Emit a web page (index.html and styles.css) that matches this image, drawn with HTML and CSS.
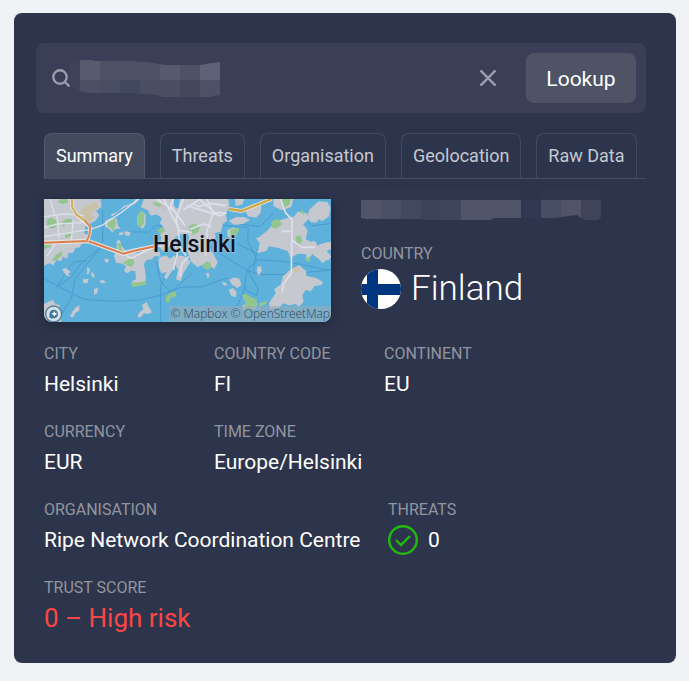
FILE: index.html
```html
<!DOCTYPE html>
<html lang="en">
<head>
<meta charset="UTF-8">
<meta name="viewport" content="width=device-width, initial-scale=1">
<title>IP Lookup</title>
<link rel="stylesheet" href="styles.css">
</head>

<body>

<main class="card">
  <form class="search" role="search">
    <svg class="search-icon" viewBox="0 0 18 18" width="18" height="18" aria-hidden="true">
      <circle cx="8" cy="8" r="6.7" />
      <path d="M13 13l3.7 3.7" />
    </svg>
    <div class="search-field">
      <input class="search-input" type="text" name="ip" aria-label="IP address">
      <!-- hidden address -->
      <svg class="search-mask" viewBox="0 0 152 38" width="152" height="38" aria-hidden="true">
        <defs>
          <clipPath id="mask1"><path d="M12 0h13v1h38l16 1 13 2 5 1h35l12-2 8-1v33l-8 1v1H95l-7-2-14-1-12-1H20l-9-2C4 27 0 21 0 15 0 7 4 0 12 0z" /></clipPath>
        </defs>
        <g clip-path="url(#mask1)">
          <path fill="#3f4359" d="M0 0h12v38H0z" />
          <path fill="#575b6e" d="M12 0h20v20H12z" />
          <path fill="#4c5165" d="M32 0h60v20H32z" />
          <path fill="#555a6d" d="M92 0h20v20H92z" />
          <path fill="#4d5266" d="M112 0h20v20h-20z" />
          <path fill="#5d6175" d="M132 0h20v20h-20z" />
          <path fill="#4c5064" d="M12 20h20v18H12z" />
          <path fill="#494e62" d="M32 20h20v18H32z" />
          <path fill="#41495e" d="M52 20h20v18H52z" />
          <path fill="#4a4f63" d="M72 20h40v18H72z" />
          <path fill="#43475c" d="M112 20h20v18h-20z" />
          <path fill="#4d5166" d="M132 20h20v18h-20z" />
        </g>
      </svg>
    </div>
    <button class="search-clear" type="reset" aria-label="Clear">
      <svg viewBox="0 0 16 16" width="16" height="16" aria-hidden="true"><path d="M1.2 1.2l13.6 13.6M14.8 1.2L1.2 14.8" /></svg>
    </button>
    <button class="search-button" type="button">Lookup</button>
  </form>

  <nav class="tabs">
    <a class="tab active" href="#summary">Summary</a>
    <a class="tab" href="#threats">Threats</a>
    <a class="tab" href="#organisation">Organisation</a>
    <a class="tab" href="#geolocation">Geolocation</a>
    <a class="tab" href="#raw">Raw Data</a>
  </nav>

  <section class="summary" id="summary">
    <div class="overview">
      <div class="map">
        <svg class="map-tile" viewBox="12 27 861 369" aria-hidden="true">
          <path fill="#5db1da" d="M12 27h861v369H12z" />
          <!-- shipping lanes -->
          <g fill="none" stroke="#4a9bd0" stroke-width="3">
            <path d="M188 60v95l-12 22-50 40-30 42-48 33 52-76 38-4" />
            <path d="M12 266l60 32 60 30 90 6 78-4 62-14 60-24 65-2 45-16 30-10" />
            <path d="M188 165l-82 100-12 60-36 60M362 396V285l20-35M265 126h60l25-20 28 4M350 215l12 60 30 32" />
            <path d="M395 305l60-55M510 170l60 40 50 30 40 14h60l150-14M622 237l34-28 70 5 60 10 87 18M622 237l-10 60 38 20 4-20-30-55M545 105l80 8-2 40 30 60M590 160l60 30-10 50M590 350l28-60M700 70l-40 40-60-8M793 85l22 22 58-6" />
          </g>
          <!-- land -->
          <g fill="#c6c8d0">
            <path d="M12 27h170l3 23-17 13 10 12-12 18-30 15-4 20 18 14-12 12-14 8-4 10-14 2-6 14-16 2-2 16-12-6-8 14-12-4-10 16-12-6-26 12z" />
            <path d="M66 238l12-4 14 12-8 6 8 10-14-6zM140 232l10 4-2 14-8 4 2-12zM128 268l18-2-4 14-12-2zM162 298l12-6-2 18-10 4zM178 272l14-2 4 8-12 2zM195 206l12 2-4 12-10-6zM158 245l6 14-4 6-8-12z" />
            <path d="M12 342l26-12 8 12 14 4-4 26 8 24H12zM98 364l10-12 10-6 0 16-12 6-6 14-10-2zM300 366l10-8-4-12 14-10 6 14 10 16-10 6-14-2-12 14-8-6z" />
            <path d="M195 92l18-8 18 2 2 18 8 12-18 2-6 10-10-12-12-6zM215 80l22-18 26-14 22-6 14-15h-12l-8 12-26 8-22 18-18 8zM238 128l10-2 2 8-14 2zM252 124l20 2-4 12-12-2z" />
            <path d="M292 78l12-16 14 12-2 30-8 12-16-10zM312 27h90v20l20 20 10 26 20 4-2 26-12 14-16-4-18 10-2 20-34 20-10-12 6-26-6-22 12-12-10-12 6-14-16-12-18 4-8-16-22-10z" />
            <path d="M230 152l10-2 4 18 18 18 20-6 8 10 18-6 6-12 20-2 6 12 18 2 4 16-18-2-8 10-16 2-8 12 6 40-2 20-40 4v-12l12-6-2-24-12-2-14 8-8-8 6-14-16-8-14-2-6-20 8-16z" />
            <path d="M356 204l22-8 12 10 14-10 4 22-12 24-16 26-8-6 8-16-16 4-8-20zM412 196l26 4 14 16-10 14-12 20-8 24-14-6 6-28-8-16zM420 27h145l4 26-12 16 4 24-12 8-6 24-18 4 2 16-20 6-8 20 20 18 14 28-10 20-12-8-16 8-4-14-18 8-20-16-12-34 6-40-10-30-26-40z" />
            <path d="M566 92l24-12 24 2 16 8-22 12-26 2zM562 120l20-8 12 12-8 18-14 4-10-8zM616 62l20-14 14-8 14 3-2 26-14 14-24-4zM585 27h28l-6 16-20 6zM800 80l10-24 26-22 26 2 10 18-6 26-20 14-8-6-10 10-16-2z" />
            <path d="M655 143l30-24 20-22 26-10 32-8 10-14 26 4 6 20-16 14 14 18-6 26 14 8 14-2 8 14 40-12 6 20-20 8 16 16-10 12-26-2-22-16-18 20 0-20-24-2-24 12-8-20-30-10-26-4-8 14-26 6 6-30-12-16z" />
            <path d="M700 27h60l-6 24-28 10-26-12zM693 330l14-20-4-12 20-16 6-24 24-20 24-12 22 18 0 14 30 6 20 12-6 10-20 2-10 16-16-4-10 16 4 20-14 14-10-8-20 4-18-6-12 14-28 4-2-18z" />
            <path d="M652 230l10-2 4 12-10 18-6-14zM568 270l14-8 16 4 6 18-12 10-16-10zM566 300l12-6 12 12-2 16-14-4zM546 275l12 4 4 8-12-2zM498 250l8-2 2 12-6 4zM608 346l34-16 10 12-6 16-38 2z" />
            <path d="M835 165l30-10 8 12-10 14-22 4zM840 208l16-2 0 10-12 2z" />
          </g>
          <!-- parks -->
          <g fill="#92c68e">
            <path d="M62 27l18-2 4 12-16 6-14-6zM20 90l14-8 20 14-6 16-16 4-12-10zM62 100l16-14 20 2-4 10-18 4-4 10zM35 210l16-18 14-8 2 12-20 16zM75 136l20-8-2 10-16 8zM12 158h18l2 14-20 6z" />
            <path d="M205 92l20-6 4 14-10 22-6-8-10-4zM294 72l10-10 10 10-2 28-10 12-10-8zM338 36l18 2 14 10-12 4-16-8zM352 120l18-10 6 12-16 12zM230 158l12 4 4 18 16 6-4 6-20-8zM246 218l20-10 12-6 6 16-10 14-20-10zM274 278l42-4 6 8-22 6-26 4zM408 170l16-4 6 14-18 8zM378 320l12-12 16-4 4 14-18 6-6 14-8-2z" />
            <path d="M446 108l18-8 16 10-4 16-18 8-10-8zM486 230l12-16 14 4 2 12-10 10zM570 120l24-8 4 8-14 24-12-2zM606 316l10-6 14 10 20 8 0 20-10 10-28-2 4-20zM656 340l26-8-4 10-20 8zM694 94l20-8 12 16-16 14-14-4zM724 27h28l-4 18-18 10-4-8zM766 140l16-4 6 16-14 16-6-8zM784 58l10 8-2 8-10-6zM796 200l16 6-4 10-12-6z" />
          </g>
          <g fill="#c8c2a8">
            <path d="M120 62l20-16 26-10 10 14-24 20 10 14-12 14-16-10zM756 240l14-10 12 8-12 12z" />
          </g>
          <path fill="#cbbccc" d="M362 38l20 8-4 18-16-12zM400 52l20 4-4 18-10-6z" />
          <!-- streets -->
          <g fill="none" stroke="#dce0eb" stroke-width="5" stroke-linejoin="round">
            <path d="M12 80l60-8 60 4M50 75l8 70M12 140l140-22 34-12 60-40 50-39M12 112l40-10 76-4M20 200l30-44M100 90l-6 60M30 27l14 48" stroke-width="4" />
            <path d="M372 27l24 50 18 34 6 60 18 26M430 27l-22 60 8 34 40 6M350 27l60 40M400 27l-8 20 44 60M400 240l12-50-8-30-60 10-70 35-18-10M420 260l6-40 20-20" />
            <path d="M430 60l50-33M440 47l40 12 60 18 20-8M455 40l22 10 35-10 46 7M478 27l46 40 36 2M500 27l20 40-20 60 4 40-8 30M514 110l-24-8-40 16" />
            <path d="M722 27l14 40 20 22-2 160-24 34-4 24M724 124h30M756 150l30 22 40 0" />
          </g>
          <!-- main roads -->
          <g fill="none" stroke-linejoin="round">
            <path stroke="#e8e4e0" stroke-width="13" d="M12 158l132-5 50 18 55 20 34-9 62-13" />
            <path stroke="#d97f4e" stroke-width="6" d="M12 158l132-5 50 18 55 20 34-9 62-13" />
            <path stroke="#e8e4e0" stroke-width="11" d="M96 27v22l12 24 28 24 15 16-3 22-8 18" />
            <path stroke="#cfad56" stroke-width="6" d="M96 27v22l12 24 28 20" />
            <path stroke="#d88755" stroke-width="6" d="M134 91l17 20-3 24-8 18" />
            <path stroke="#e8e4e0" stroke-width="12" d="M567 57l38 6 90-36" />
            <path stroke="#cda845" stroke-width="7" d="M567 57l38 6 90-36" />
          </g>
          <!-- logo -->
          <circle cx="41" cy="372" r="24" fill="#d6e0e8" stroke="#557f98" stroke-width="4" />
          <path fill="#3e7a99" d="M29 384c-2-14 0-24 12-25 17 0 17 25 1 26-5 1-9 0-13-1z" />
          <path fill="#fff" d="M43 363l3 6 6 2-6 3-3 6-3-6-6-3 6-2z" />
        </svg>
        <span class="map-city">Helsinki</span>
        <span class="map-credit">© Mapbox © OpenStreetMap</span>
      </div>

      <div class="place">
        <!-- hidden address -->
        <svg class="place-mask" viewBox="0 0 240 32" width="240" height="32" aria-hidden="true">
          <path fill="#2f364e" d="M0 0h160v12H0zM180 0h60v12h-60z" />
          <path fill="#4f5468" d="M0 12h20v19H5l-5-1z" />
          <path fill="#4a5065" d="M20 12h20v19H20z" />
          <path fill="#424a5f" d="M40 12h20v19H40z" />
          <path fill="#3e4359" d="M60 12h20v20H65l-5-1z" />
          <path fill="#3e465b" d="M80 12h20v20H80z" />
          <path fill="#4f5468" d="M100 12h60v18h-27l-3 2h-30z" />
          <path fill="#323852" d="M160 12h20v18h-20z" />
          <path fill="#484e63" d="M180 12h20v17l-6 1h-14z" />
          <path fill="#4f5468" d="M200 12h20v18l-4-3-16 2z" />
          <path fill="#404459" d="M220 12h20v17l-3 3h-13l-4-3z" />
        </svg>
        <dl class="item">
          <dt>COUNTRY</dt>
          <dd class="country">
            <svg class="flag" viewBox="0 0 40 40" width="40" height="40" aria-hidden="true">
              <clipPath id="round"><circle cx="20" cy="20" r="20" /></clipPath>
              <g clip-path="url(#round)">
                <path fill="#fff" d="M0 0h40v40H0z" />
                <path fill="#003580" d="M6 0h11v40H6zM0 15h40v11H0z" />
              </g>
            </svg>
            Finland
          </dd>
        </dl>
      </div>
    </div>

    <div class="row">
      <dl class="item col"><dt>CITY</dt><dd>Helsinki</dd></dl>
      <dl class="item col"><dt>COUNTRY CODE</dt><dd>FI</dd></dl>
      <dl class="item col"><dt>CONTINENT</dt><dd>EU</dd></dl>
    </div>

    <div class="row">
      <dl class="item col"><dt>CURRENCY</dt><dd>EUR</dd></dl>
      <dl class="item col"><dt>TIME ZONE</dt><dd>Europe/Helsinki</dd></dl>
    </div>

    <div class="row">
      <dl class="item wide"><dt>ORGANISATION</dt><dd>Ripe Network Coordination Centre</dd></dl>
      <dl class="item">
        <dt>THREATS</dt>
        <dd class="threats">
          <svg class="check" viewBox="0 0 30 30" width="30" height="30" aria-hidden="true">
            <circle cx="15" cy="15" r="13.8" />
            <path d="M8 15l5 5 9-9" />
          </svg>
          0
        </dd>
      </dl>
    </div>

    <div class="row">
      <dl class="item"><dt>TRUST SCORE</dt><dd class="risk">0 – High risk</dd></dl>
    </div>
  </section>
</main>

</body>
</html>
```
FILE: styles.css
```css
* {
	box-sizing: border-box;
}

body {
	margin: 0;
	padding: 13px 13px 18px 14px;
	background: #f1f2f6;
	color: #fff;
	font-family: Roboto, "Liberation Sans", sans-serif;
	font-size: 21px;
}

dl, dd {
	margin: 0;
}

.card {
	padding: 30px 30px 30px 22px;
	background: #2d354d;
	border-radius: 8px;
}

/* search bar */

.search {
	display: flex;
	align-items: center;
	padding: 10px 10px 10px 16px;
	background: #3b3e57;
	border-radius: 8px;
}

.search svg {
	display: block;
}

.search-icon, .search-clear svg {
	fill: none;
	stroke: #9a9dab;
	stroke-width: 2.4;
	stroke-linecap: round;
}

.search-field {
	position: relative;
	flex: 1;
	min-width: 0;
}

.search-input {
	display: block;
	width: 100%;
	height: 50px;
	padding: 0 10px;
	background: none;
	border: 0;
	outline: none;
	color: #fff;
	font: inherit;
}

.search-mask {
	position: absolute;
	top: 7px;
	left: -2px;
}

.search-clear {
	margin-right: 20px;
	padding: 10px;
	background: none;
	border: 0;
	cursor: pointer;
}

.search-button {
	width: 110px;
	height: 50px;
	padding: 2px 0 0;
	background: #4e5366;
	border: 0;
	border-radius: 8px;
	color: #fff;
	font: inherit;
	cursor: pointer;
}

/* tabs */

.tabs {
	display: flex;
	gap: 15px;
	margin: 20px 0 0 8px;
	border-bottom: 1px solid #474d60;
}

.tab {
	padding: 0 11px;
	border: 1px solid #424960;
	border-bottom: 0;
	border-radius: 8px 8px 0 0;
	color: #c5c8d0;
	font-size: 18px;
	line-height: 44px;
	text-decoration: none;
	white-space: nowrap;
}

.tab.active {
	background: #434a5e;
	border-color: #535a6e;
	color: #fff;
}

/* summary */

.summary {
	padding: 20px 0 0 8px;
}

.overview {
	display: flex;
	gap: 30px;
	margin-bottom: 22px;
}

.map {
	position: relative;
	flex: 0 1 287px;
	align-self: flex-start;
	overflow: hidden;
	border-radius: 0 0 8px 8px;
	box-shadow: 0 2px 12px rgba(0, 0, 0, 0.3);
}

.map-tile {
	display: block;
	width: 100%;
}

.map-city {
	position: absolute;
	top: 32px;
	left: 109px;
	color: #0d1224;
	font-size: 23px;
	font-weight: 500;
	line-height: 28px;
	text-shadow: 0 0 2px #c6c8d0, 0 0 2px #c6c8d0;
}

.map-credit {
	position: absolute;
	right: 0;
	bottom: 0;
	padding: 0 1px;
	background: rgba(150, 170, 185, 0.6);
	color: #34465a;
	font-family: "Open Sans", sans-serif;
	font-size: 12px;
	font-weight: 300;
	line-height: 16px;
	white-space: nowrap;
}

.place-mask {
	display: block;
	margin: -11px 0 24px;
}

.item dt {
	margin-bottom: 5px;
	color: #92959f;
	font-size: 16px;
	line-height: 20px;
}

.item dd {
	line-height: 30px;
}

.item .country {
	display: flex;
	align-items: center;
	gap: 10px;
	font-size: 35px;
	font-weight: 300;
	line-height: 40px;
}

.row {
	display: flex;
	margin-bottom: 23px;
}

.row:last-child {
	margin-bottom: 0;
}

.col {
	width: 170px;
}

.wide {
	min-width: 324px;
	margin-right: 20px;
}

.threats {
	display: flex;
	gap: 10px;
}

.check {
	fill: none;
	stroke: #22bb0e;
	stroke-width: 2.4;
}

.item .risk {
	color: #fb4545;
	font-size: 26px;
}
```
